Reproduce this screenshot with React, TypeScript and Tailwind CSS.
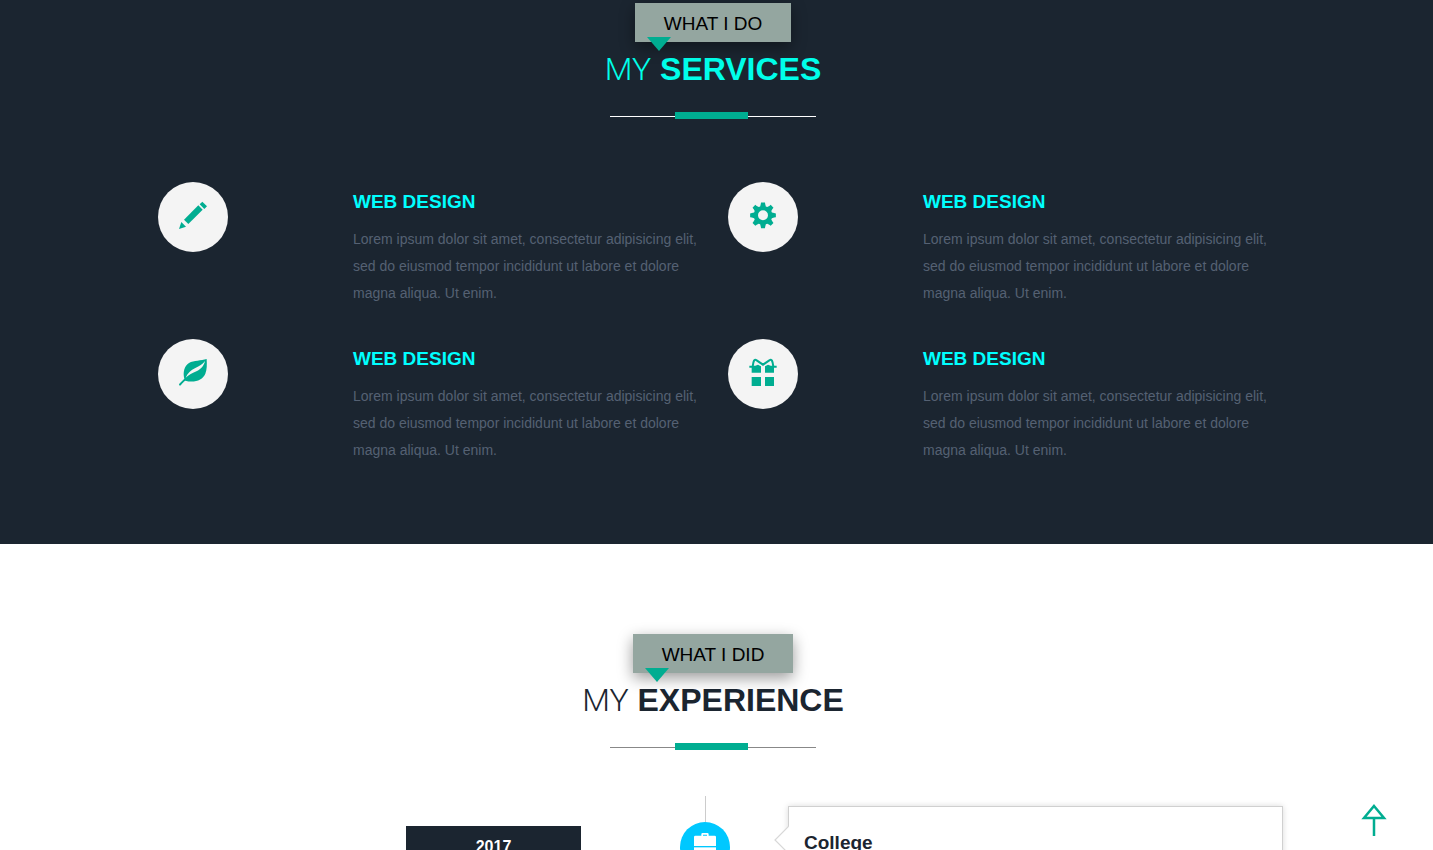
import type { ReactNode } from "react";

function GearPath() {
  const points: string[] = [];
  for (let i = 0; i < 8; i++) {
    const base = (i * Math.PI) / 4;
    const tooth: [number, number][] = [
      [-0.31, 28],
      [-0.2, 34],
      [-0.15, 39],
      [0.15, 39],
      [0.2, 34],
      [0.31, 28],
    ];
    tooth.forEach(([angle, radius]) => {
      const x = 129 + radius * Math.cos(base + angle);
      const y = 121 + radius * Math.sin(base + angle);
      points.push(`${x.toFixed(1)} ${y.toFixed(1)}`);
    });
  }
  const hole = "M114 121a15 15 0 1 0 30 0a15 15 0 1 0 -30 0Z";
  return <path fillRule="evenodd" d={`M${points.join("L")}Z${hole}`} />;
}

const pencil = (
  <>
    <path d="M87 162L94 141L108 155Z" />
    <path d="M102 134L145 91L158 104L115 147Z" />
    <path d="M149 88L157 80L171 94L163 102Z" />
  </>
);

const leaf = (
  <>
    <path d="M170 81C171 98 171 113 166 125C158 144 133 154 106 146C101 149 97 154 93 159C90 163 85 159 88 155L103 140C98 121 103 101 117 93C132 84 153 87 170 81Z" />
    <path
      d="M107 137C113 123 122 115 136 108C148 102 158 97 165 87C161 103 153 111 141 117C127 123 116 128 107 137Z"
      fill="#f4f4f4"
    />
  </>
);

const gift = (
  <>
    <path d="M95 135H123V162H95ZM135 135H162V162H135Z" />
    <path d="M88 101H106L114 98L123 103V122H95V107H88ZM170 101H152L144 98L135 103V122H162V107H170Z" />
    <path
      d="M98 104C100 86 103 80 110 85L129 98L148 85C155 80 158 86 160 104"
      fill="none"
      stroke="currentColor"
      strokeWidth="6"
    />
  </>
);

const blurb =
  "Lorem ipsum dolor sit amet, consectetur adipisicing elit, sed do eiusmod tempor incididunt ut labore et dolore magna aliqua. Ut enim.";

const services: { id: string; title: string; icon: ReactNode }[] = [
  { id: "pencil", title: "WEB DESIGN", icon: pencil },
  { id: "gear", title: "WEB DESIGN", icon: <GearPath /> },
  { id: "leaf", title: "WEB DESIGN", icon: leaf },
  { id: "gift", title: "WEB DESIGN", icon: gift },
];

function SectionHeading({
  tag,
  light,
  strong,
  tone,
  rule,
}: {
  tag: string;
  light: string;
  strong: string;
  tone: string;
  rule: string;
}) {
  return (
    <header className="flex flex-col items-center">
      <div className="relative bg-[#94a6a0] px-[29px] pt-[7px] pb-[5px] text-[19px] leading-[27px] text-black shadow-[0_5px_15px_rgba(0,0,0,0.4)]">
        {tag}
        <svg
          className="absolute top-[34px] left-3 h-3.5 w-6 text-[#00ad91]"
          viewBox="0 0 24 14"
          fill="currentColor"
          aria-hidden="true"
        >
          <path d="M0 0H24L12 14Z" />
        </svg>
      </div>
      <h2 className={`mt-[7px] text-[32px] leading-10 ${tone}`}>
        <span className="font-['Roboto'] font-[350]">{light}</span>{" "}
        <strong className="font-bold">{strong}</strong>
      </h2>
      <div className="mt-[23px] flex h-[7px] w-[206px] items-center">
        <span className={`mt-0.5 h-px w-[65px] ${rule}`} />
        <span className="h-[7px] w-[73px] bg-[#00ad91]" />
        <span className={`mt-0.5 h-px flex-1 ${rule}`} />
      </div>
    </header>
  );
}

export default function App() {
  return (
    <main className="relative h-screen overflow-hidden bg-white font-['Liberation_Sans',Arial,sans-serif]">
      <section className="bg-[#1b2530] pt-[3px] pr-[7px] pb-12">
        <SectionHeading
          tag="WHAT I DO"
          light="MY"
          strong="SERVICES"
          tone="text-[#00ffea]"
          rule="bg-white"
        />
        <div className="mx-auto mt-[63px] grid max-w-[1140px] grid-cols-1 md:grid-cols-2">
          {services.map((service) => (
            <article key={service.id} className="flex px-[15px] pb-8">
              <div className="w-[195px] shrink-0">
                <div className="flex size-[70px] items-center justify-center rounded-full bg-[#f4f4f4] pb-0.5 text-[#00ad91]">
                  <svg
                    className="size-[30px]"
                    viewBox="84 78 90 90"
                    fill="currentColor"
                    aria-hidden="true"
                  >
                    {service.icon}
                  </svg>
                </div>
              </div>
              <div className="min-w-0 flex-1 pt-1.5">
                <h3 className="text-[19px] leading-[27px] font-bold text-[#00ffff]">
                  {service.title}
                </h3>
                <p className="mt-[11px] text-sm leading-[27px] text-[#556173]">{blurb}</p>
              </div>
            </article>
          ))}
        </div>
      </section>

      <section className="pt-[90px] pr-[7px]">
        <SectionHeading
          tag="WHAT I DID"
          light="MY"
          strong="EXPERIENCE"
          tone="text-[#1b2530]"
          rule="bg-[#888888]"
        />
        <div className="mx-auto mt-[46px] flex max-w-[1140px]">
          <div className="flex w-[438px] justify-end pt-[30px]">
            <time className="h-11 w-[175px] bg-[#1b2530] text-center text-base leading-[42px] font-bold text-white">
              2017
            </time>
          </div>
          <div className="mr-[58px] ml-[99px] flex w-[50px] flex-col items-center">
            <span className="h-[26px] w-px bg-[#cccccc]" />
            <span className="flex size-[50px] justify-center rounded-full bg-[#00c8ff] pt-[11px] text-white">
              <svg className="h-6 w-[22px]" viewBox="0 0 66 72" fill="currentColor" aria-hidden="true">
                <path
                  fillRule="evenodd"
                  d="M22 8V4Q22 0 26 0H40Q44 0 44 4V8H62Q66 8 66 12V39H0V12Q0 8 4 8ZM27 8H39V5H27Z"
                />
                <path d="M0 43H66V62H0Z" />
              </svg>
            </span>
          </div>
          <article className="relative mt-2.5 h-40 flex-1 border border-[#d0d0d0] bg-white px-[15px] pt-[22px] shadow-[0_0_6px_rgba(0,0,0,0.15)]">
            <svg
              className="absolute top-[18px] -left-[15px] h-[30px] w-[15px]"
              viewBox="0 0 15 30"
              aria-hidden="true"
            >
              <path d="M15 1L1 15L15 29" fill="#ffffff" stroke="#d8d8d8" strokeWidth="1.2" />
            </svg>
            <h3 className="text-[19px] leading-[27px] font-bold text-[#1b2530]">College</h3>
          </article>
        </div>
      </section>

      <a
        href="#top"
        aria-label="Back to top"
        className="absolute right-[46px] bottom-[13px] text-[#00ad91]"
      >
        <svg
          className="h-[34px] w-[26px]"
          viewBox="0 0 26 34"
          fill="none"
          stroke="currentColor"
          strokeWidth="2.5"
          aria-hidden="true"
        >
          <path d="M13 3L23 15H3ZM13 15V33" />
        </svg>
      </a>
    </main>
  );
}
